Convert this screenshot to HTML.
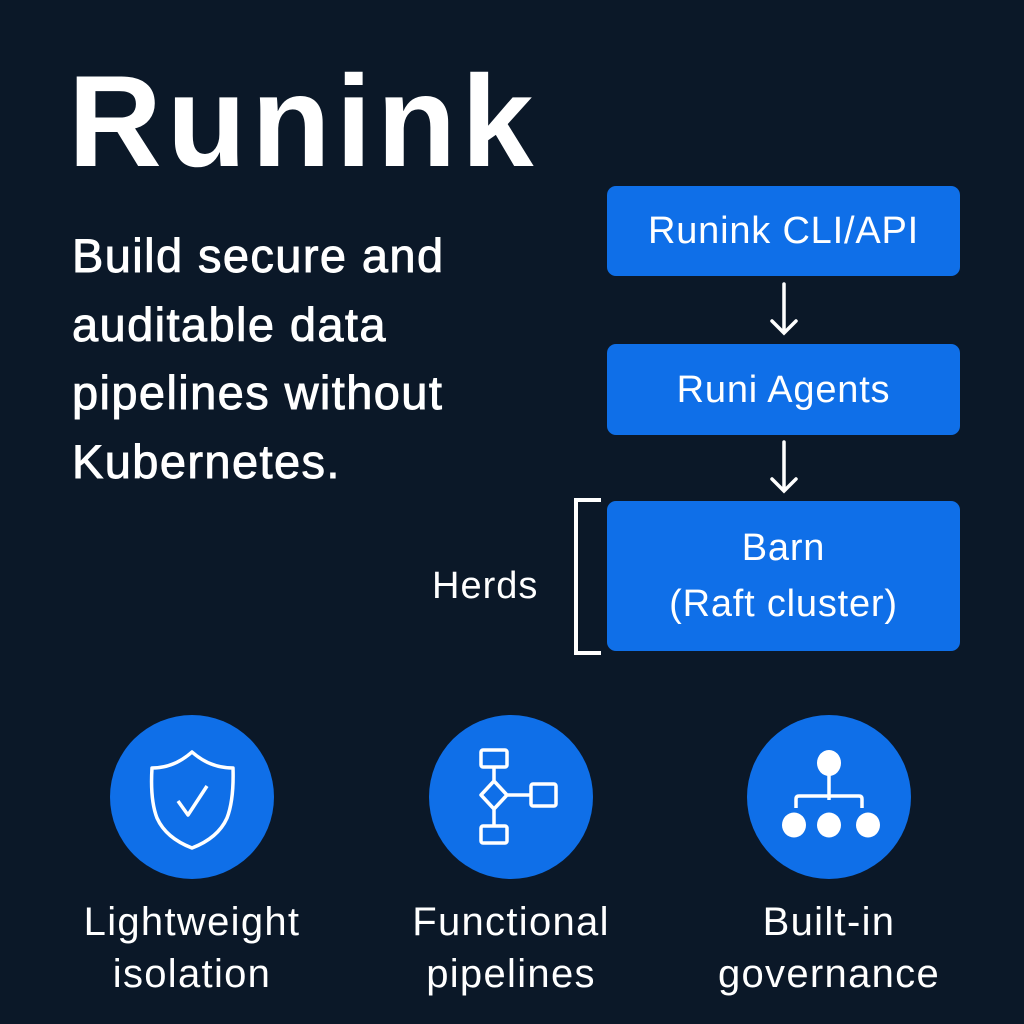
<!DOCTYPE html>
<html><head><meta charset="utf-8"><style>
*{margin:0;padding:0;box-sizing:border-box}
body{width:1024px;height:1024px;background:#0b1828;position:relative;overflow:hidden;font-family:"Liberation Sans",sans-serif;color:#fff}
.a{position:absolute;white-space:nowrap}
.title{left:68px;top:46px;font-size:130px;font-weight:bold;line-height:150px;letter-spacing:5px}
.sub{left:72px;top:222px;font-size:47px;font-weight:normal;line-height:68.5px;letter-spacing:1.4px;-webkit-text-stroke:0.9px #fff}
.box{position:absolute;left:607px;width:353px;background:#0f6fe8;border-radius:9px;display:flex;align-items:center;justify-content:center;flex-direction:column;font-size:38px;letter-spacing:0.8px;text-align:center;line-height:56px}
.lab{position:absolute;width:280px;text-align:center;font-size:40px;letter-spacing:1.3px;line-height:52px}
.circ{position:absolute;width:164px;height:164px;border-radius:50%;background:#0f6fe8;top:715px}
</style></head><body>
<div class="a title">Runink</div>
<div class="a sub">Build secure and<br>auditable data<br>pipelines without<br>Kubernetes.</div>

<div class="box" style="top:186px;height:90px">Runink CLI/API</div>
<div class="box" style="top:344px;height:91px">Runi Agents</div>
<div class="box" style="top:501px;height:150px">Barn<br>(Raft cluster)</div>

<svg class="a" style="left:0;top:0" width="1024" height="1024">
<g stroke="#fff" stroke-width="3.5" fill="none" stroke-linecap="round">
<path d="M784 284V332M772 321L784 333L796 321"/>
<path d="M784 442V490M772 479L784 491L796 479"/>
</g>
<path d="M601 500H576V653H601" stroke="#fff" stroke-width="4" fill="none"/>
</svg>
<div class="a" style="left:432px;top:563px;font-size:38px;letter-spacing:1px;line-height:46px">Herds</div>

<div class="circ" style="left:110px"></div>
<div class="circ" style="left:429px"></div>
<div class="circ" style="left:747px"></div>
<svg class="a" style="left:0;top:0" width="1024" height="1024">
<g stroke="#fff" stroke-width="3.5" fill="none" stroke-linejoin="round">
<path d="M152 768Q174 768 192 752Q210 768 233 768Q234 800 227 818Q218 838 192 848Q166 838 157 818Q150 800 152 768Z"/>
<path d="M178 801L188 815L207 786"/>
<rect x="481" y="750" width="26" height="17" rx="2"/>
<rect x="481" y="826" width="26" height="17" rx="2"/>
<rect x="531" y="784" width="25" height="22" rx="2"/>
<path d="M494 767V781M494 809V826M494 781L507 795L494 809L481 795Z M507 795H531"/>
<path d="M829 770V800M796 808V799Q796 796 799 796H859Q862 796 862 799V808"/>
</g>
<g fill="#fff">
<ellipse cx="829" cy="763" rx="12" ry="13"/>
<ellipse cx="794" cy="825" rx="12" ry="12.5"/>
<ellipse cx="829" cy="825" rx="12" ry="12.5"/>
<ellipse cx="868" cy="825" rx="12" ry="12.5"/>
</g>
</svg>

<div class="lab" style="left:52px;top:896px">Lightweight<br>isolation</div>
<div class="lab" style="left:371px;top:896px">Functional<br>pipelines</div>
<div class="lab" style="left:689px;top:896px">Built-in<br>governance</div>
</body></html>
